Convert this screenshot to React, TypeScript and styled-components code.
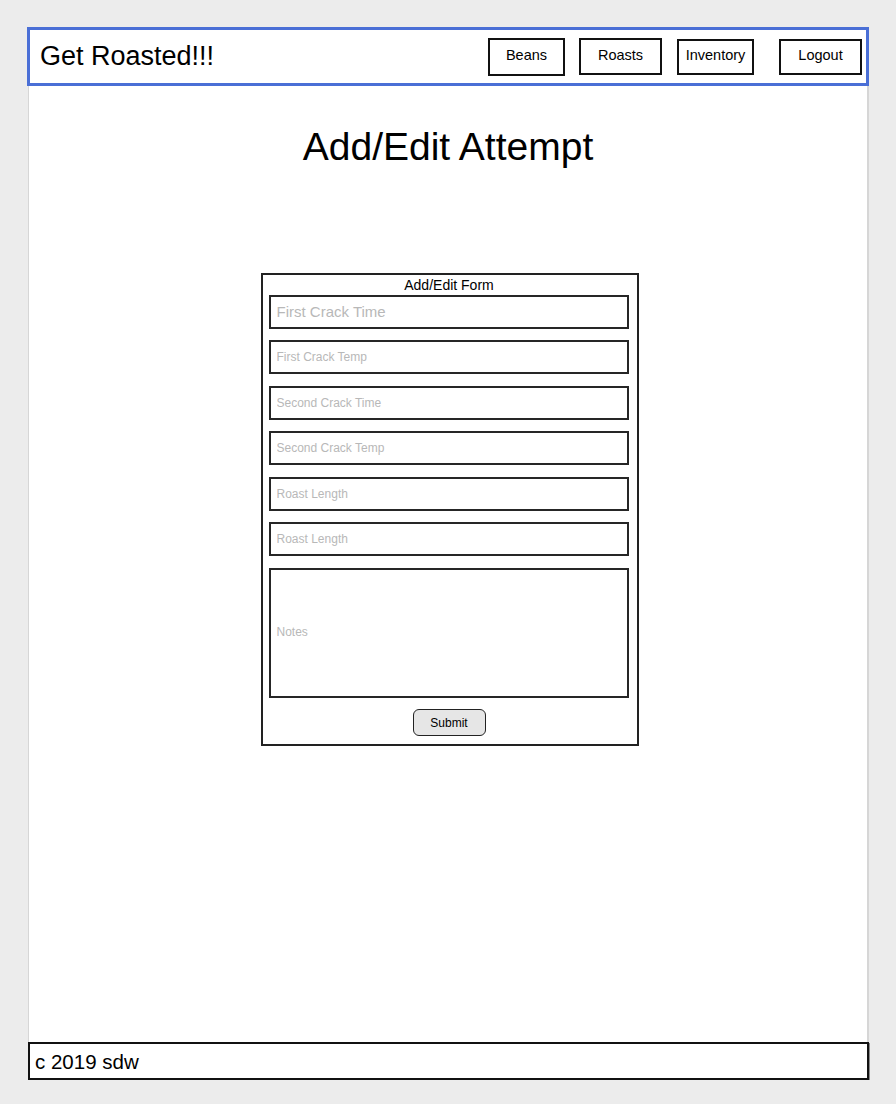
import styled, { createGlobalStyle } from "styled-components";

const GlobalStyle = createGlobalStyle`
  html, body {
    margin: 0;
    padding: 0;
    background: #ececec;
    font-family: "Liberation Sans", Arial, Helvetica, sans-serif;
    color: #000;
  }
  * {
    box-sizing: border-box;
  }
`;

const Frame = styled.div`
  padding: 27px 0 0 27px;
  width: 870px;
`;

const TopBar = styled.header`
  display: flex;
  align-items: center;
  height: 59px;
  width: 842px;
  border: 3px solid #4a6fd6;
  background: #fff;
  padding: 0 4px 0 10px;
`;

const Brand = styled.div`
  font-size: 27px;
  flex: 1;
`;

const Nav = styled.nav`
  display: flex;
  align-items: center;
`;

const NavButton = styled.button<{ $w: number; $h: number; $gap: number }>`
  width: ${(p) => p.$w}px;
  height: ${(p) => p.$h}px;
  margin-left: ${(p) => p.$gap}px;
  border: 2px solid #111;
  background: #fff;
  font-family: inherit;
  font-size: 14.5px;
  padding: 0 0 4px;
  color: #000;
`;

const Main = styled.main`
  margin-left: 1px;
  width: 841px;
  height: 956px;
  background: #fff;
  border-left: 1px solid #d6d6d6;
  border-right: 2px solid #d6d6d6;
  padding-top: 38px;
  display: flex;
  flex-direction: column;
  align-items: center;
`;

const PageTitle = styled.h1`
  margin: 0;
  font-weight: normal;
  font-size: 39px;
  line-height: 46px;
`;

const FormBox = styled.form`
  margin-top: 103px;
  margin-left: 3px;
  width: 378px;
  border: 2px solid #222;
  padding: 0 7px 8px 6px;
  display: flex;
  flex-direction: column;
  gap: 11.5px;
`;

const FormTitle = styled.div`
  font-size: 14px;
  line-height: 18px;
  text-align: center;
  margin: 1px 0 -11px;
`;

const Field = styled.input<{ $big?: boolean }>`
  width: 360px;
  height: 34px;
  border: 2px solid #262626;
  padding: 0 6px;
  font-family: inherit;
  font-size: ${(p) => (p.$big ? 15 : 12)}px;
  outline: none;
  &::placeholder {
    color: #b8b8b8;
  }
`;

const Notes = styled.textarea`
  width: 360px;
  height: 130px;
  border: 2px solid #262626;
  padding: 55px 6px 0;
  font-family: inherit;
  font-size: 12px;
  resize: none;
  outline: none;
  &::placeholder {
    color: #b8b8b8;
  }
`;

const Submit = styled.button`
  align-self: center;
  width: 73px;
  height: 27px;
  border: 1.5px solid #222;
  border-radius: 6px;
  background: #e6e6e6;
  font-family: inherit;
  font-size: 12px;
  color: #000;
  padding: 0;
`;

const Footer = styled.footer`
  margin-left: 1px;
  width: 841px;
  height: 38px;
  border: 2px solid #111;
  background: #fff;
  box-shadow: 1px 1px 0 #888;
  font-size: 20.5px;
  line-height: 35px;
  padding-left: 5px;
`;

const navItems = [
  { label: "Beans", w: 77, h: 38, gap: 0 },
  { label: "Roasts", w: 83, h: 37, gap: 14 },
  { label: "Inventory", w: 77, h: 36, gap: 15 },
  { label: "Logout", w: 83, h: 36, gap: 25 },
];

const fields = [
  "First Crack Temp",
  "Second Crack Time",
  "Second Crack Temp",
  "Roast Length",
  "Roast Length",
];

export default function App() {
  return (
    <>
      <GlobalStyle />
      <Frame>
        <TopBar>
          <Brand>Get Roasted!!!</Brand>
          <Nav>
            {navItems.map((n) => (
              <NavButton key={n.label} $w={n.w} $h={n.h} $gap={n.gap}>
                {n.label}
              </NavButton>
            ))}
          </Nav>
        </TopBar>
        <Main>
          <PageTitle>Add/Edit Attempt</PageTitle>
          <FormBox onSubmit={(e) => e.preventDefault()}>
            <FormTitle>Add/Edit Form</FormTitle>
            <Field $big placeholder="First Crack Time" />
            {fields.map((f, i) => (
              <Field key={i} placeholder={f} />
            ))}
            <Notes placeholder="Notes" />
            <Submit type="submit">Submit</Submit>
          </FormBox>
        </Main>
        <Footer>c 2019 sdw</Footer>
      </Frame>
    </>
  );
}
